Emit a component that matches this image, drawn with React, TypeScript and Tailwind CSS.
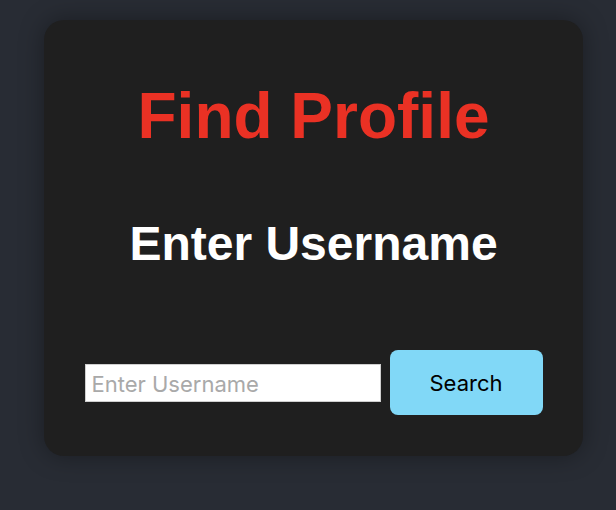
import React, { useState } from "react";

const App: React.FC = () => {
  const [username, setUsername] = useState("");

  const handleSubmit = (e: React.FormEvent) => {
    e.preventDefault();
  };

  return (
    <div className="min-h-[510px] w-full bg-[#282c34] pt-[20px] pl-[44px]">
      <div className="w-[539px] h-[436px] rounded-[20px] bg-[#1f1f1f] shadow-[0_0_24px_rgba(0,0,0,0.35)] flex flex-col items-center pt-[64px]">
        <h1 className="text-[64px] leading-none font-bold text-[#ea3124] font-['Liberation_Sans',Arial,sans-serif]">
          Find Profile
        </h1>
        <h2 className="mt-[72px] text-[48px] leading-none font-bold text-white font-['Liberation_Sans',Arial,sans-serif]">
          Enter Username
        </h2>
        <form
          onSubmit={handleSubmit}
          className="mt-[82px] flex items-center gap-[9px] font-['Inter',sans-serif]"
        >
          <input
            type="text"
            value={username}
            onChange={(e) => setUsername(e.target.value)}
            placeholder="Enter Username"
            className="w-[296px] h-[38px] bg-white border border-[#cfcfcf] px-[6px] pt-[2px] text-[22px] text-black placeholder:text-[#a9a9a9] outline-none"
          />
          <button
            type="submit"
            className="w-[153px] h-[65px] rounded-[8px] bg-[#81d8f7] pt-[2px] text-[22px] text-black"
          >
            Search
          </button>
        </form>
      </div>
    </div>
  );
};

export default App;
